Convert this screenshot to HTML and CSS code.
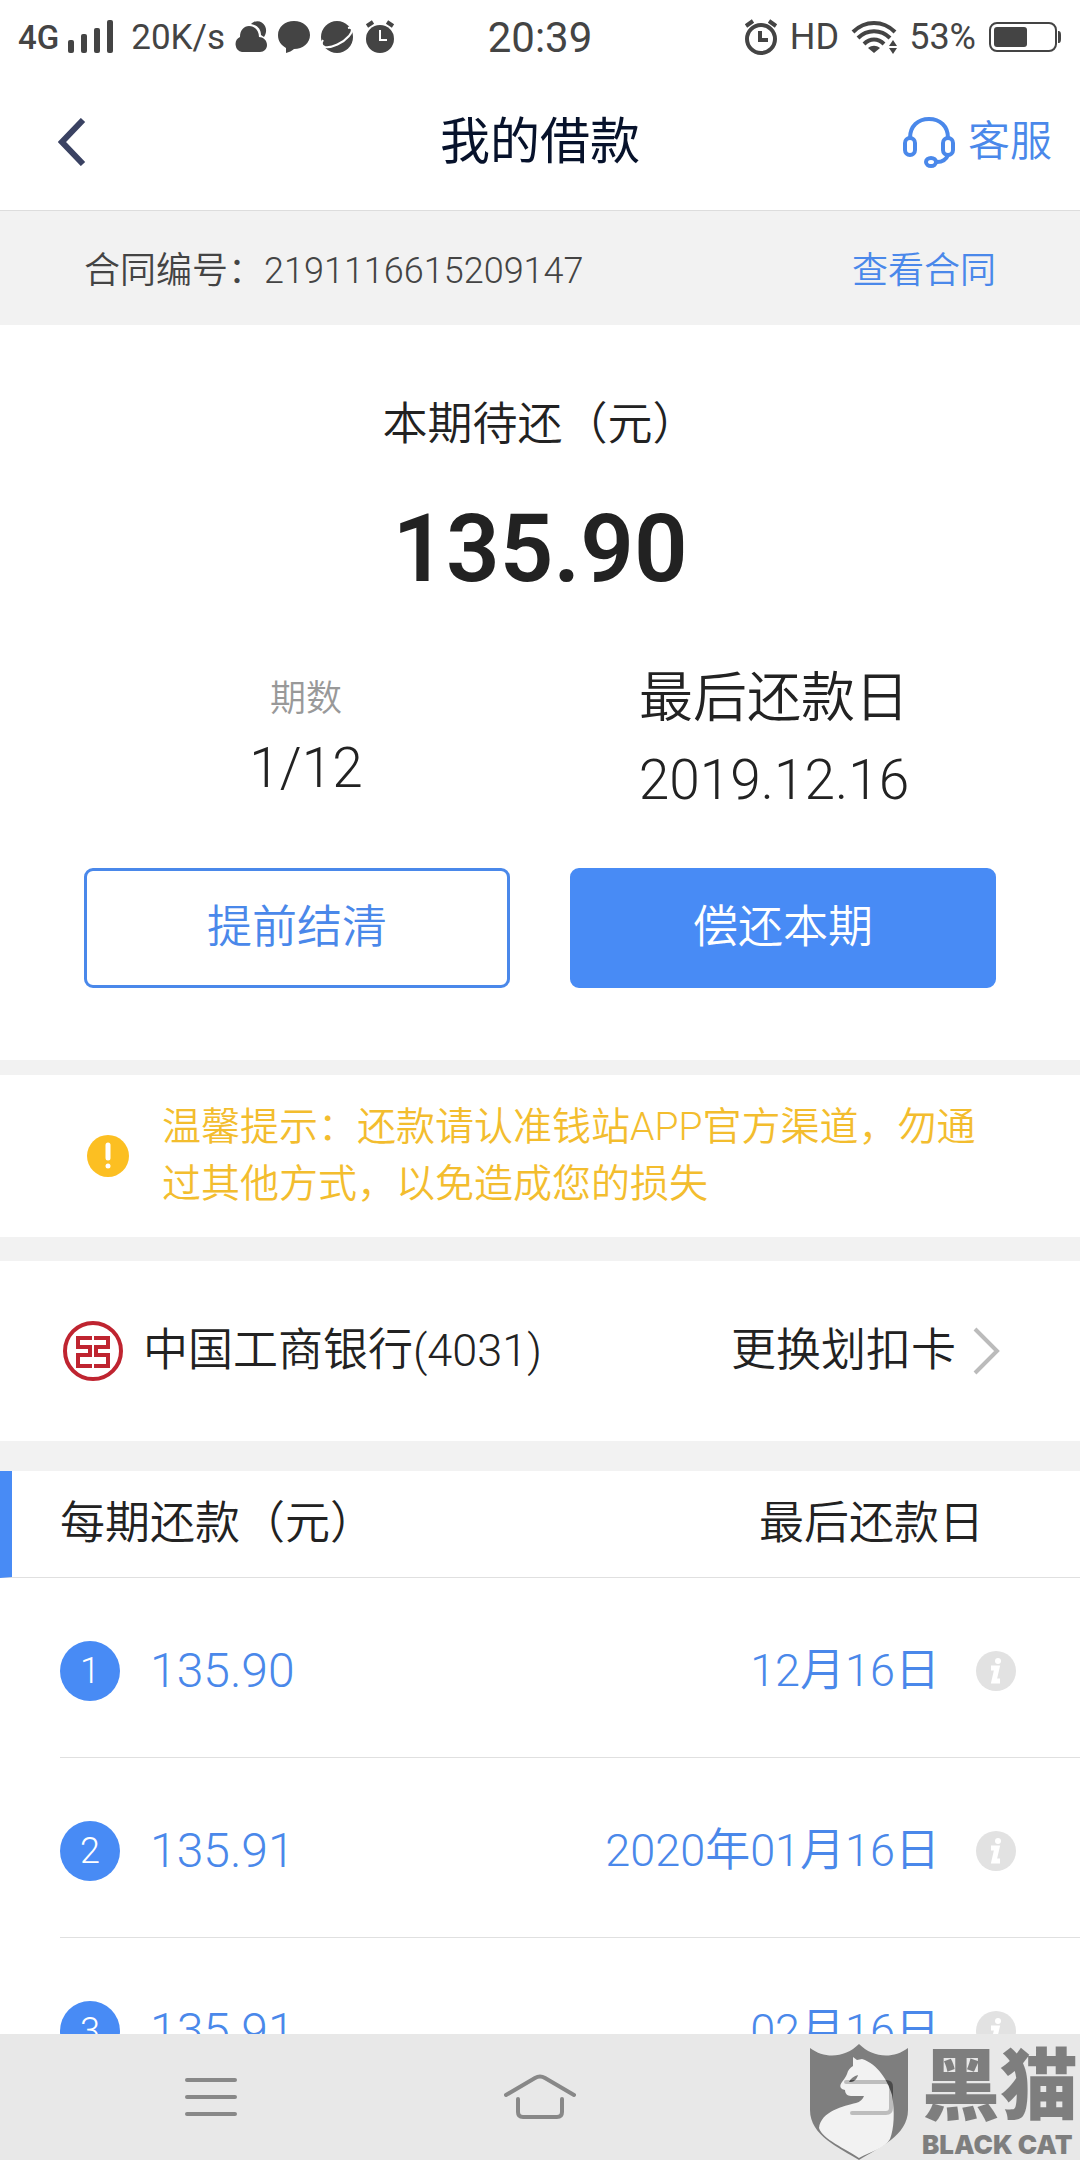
FILE: index.html
```html
<!DOCTYPE html>
<html lang="zh-CN">

<head>
    <meta charset="UTF-8">
    <meta name="viewport" content="width=device-width, initial-scale=1.0">
    <title>我的借款</title>
    <link rel="stylesheet" href="styles.css">
</head>

<body>
    <div class="status-bar">
        <div class="status-left">
            <span class="network">4G</span>
            <svg class="signal" width="46" height="34" viewBox="0 0 46 34">
                <rect x="0" y="20" width="6" height="13" rx="2" />
                <rect x="13" y="14" width="6" height="19" rx="2" />
                <rect x="26" y="8" width="6" height="25" rx="2" />
                <rect x="39" y="0" width="6" height="33" rx="2" />
            </svg>
            <span class="speed">20K/s</span>
            <div class="status-icons">
                <svg width="34" height="34" viewBox="0 0 34 34">
                    <path d="M17 4C21 0 28 0 31 6c2 4 1 8-1 11-1-1-2-1-3-2C27 9 23 5 17 4z" />
                    <path d="M8 32a8 8 0 0 1-2-15C6 10 10 6 15 6c6 0 10 5 10 11 4 0 8 3 8 8 0 4-3 7-7 7z" />
                </svg>
                <svg width="34" height="34" viewBox="0 0 34 34">
                    <path d="M17 1c9 0 16 6 16 14S26 29 17 29c-2 2-5 3-8 4V28C4 25 1 21 1 15 1 7 8 1 17 1z" />
                </svg>
                <svg width="34" height="34" viewBox="0 0 34 34">
                    <circle cx="17" cy="17" r="16" />
                    <path class="ring" d="M28 8c5-1 5 3 1 8-6 7-17 12-24 11-4-1-4-4-2-7" />
                </svg>
                <svg width="34" height="34" viewBox="0 0 34 34">
                    <circle cx="17" cy="19" r="14" />
                    <path class="line" d="M4 6l6-4M30 6l-6-4" />
                    <path class="hand" d="M17 10v10h7" />
                </svg>
            </div>
        </div>
        <time class="clock">20:39</time>
        <div class="status-right">
            <svg width="34" height="36" viewBox="0 0 34 36">
                <circle class="line" cx="17" cy="20" r="14" />
                <path class="line" d="M2 7l7-5M32 7l-7-5M16 12v9h8" />
            </svg>
            <span class="hd">HD</span>
            <svg width="46" height="34" viewBox="0 0 46 34">
                <path class="line" d="M2 12c12-12 30-12 42 0M7 18c9-9 23-9 32 0M13 24c6-6 14-6 20 0" />
                <path d="M17 28c4-3 8-3 12 0l-6 5z" />
                <path d="M38 26l4-6 4 6zM38 28l4 6 4-6z" />
            </svg>
            <span class="battery-text">53%</span>
            <svg width="74" height="32" viewBox="0 0 74 32">
                <rect class="case" x="2" y="2" width="66" height="28" rx="7" />
                <rect x="6" y="6" width="33" height="20" rx="3" />
                <path d="M70 10c3 0 3 2 3 6s0 6-3 6z" />
            </svg>
        </div>
    </div>

    <header class="header">
        <button class="back" type="button" aria-label="返回">
            <svg width="28" height="48" viewBox="0 0 28 48">
                <path d="M25 2L4 24l21 22" />
            </svg>
        </button>
        <h1 class="title">我的借款</h1>
        <a class="service" href="#">
            <svg width="54" height="52" viewBox="0 0 54 52">
                <path d="M8 22C8 10 16 3 27 3s19 7 19 19" />
                <rect x="3" y="22" width="10" height="17" rx="5" />
                <rect x="41" y="22" width="10" height="17" rx="5" />
                <path d="M46 39c-2 5-6 7-11 7" />
                <ellipse cx="29" cy="46" rx="5" ry="4" />
            </svg>
            客服
        </a>
    </header>

    <main class="content">
        <div class="contract">
            <span>合同编号：2191116615209147</span>
            <a href="#">查看合同</a>
        </div>

        <section class="summary">
            <h2 class="summary-title">本期待还（元）</h2>
            <p class="amount">135.90</p>
            <div class="summary-info">
                <div class="period">
                    <p class="label">期数</p>
                    <p class="value">1/12</p>
                </div>
                <div class="deadline">
                    <p class="label">最后还款日</p>
                    <p class="value">2019.12.16</p>
                </div>
            </div>
            <div class="actions">
                <button class="btn" type="button">提前结清</button>
                <button class="btn btn-primary" type="button">偿还本期</button>
            </div>
        </section>

        <section class="notice">
            <svg width="42" height="42" viewBox="0 0 42 42">
                <circle cx="21" cy="21" r="21" />
                <path d="M21 10v13" />
                <path d="M21 31v0" />
            </svg>
            <p>温馨提示：还款请认准钱站APP官方渠道，勿通过其他方式，以免造成您的损失</p>
        </section>

        <section class="bank">
            <svg class="bank-logo" width="60" height="60" viewBox="0 0 60 60">
                <circle cx="30" cy="30" r="28" />
                <path d="M29 17H15v9h12v8H15v11h14M31 17h14v9H33v8h12v11H31" />
            </svg>
            <span class="bank-name">中国工商银行(4031)</span>
            <a class="change-card" href="#">
                <span>更换划扣卡</span>
                <svg width="28" height="48" viewBox="0 0 28 48">
                    <path d="M3 2l22 22L3 46" />
                </svg>
            </a>
        </section>

        <table class="plan">
            <thead>
                <tr>
                    <th>每期还款（元）</th>
                    <th>最后还款日</th>
                </tr>
            </thead>
            <tbody>
                <tr>
                    <td class="no"><span>1</span></td>
                    <td class="money">135.90</td>
                    <td class="date">12月16日</td>
                    <td class="info">
                        <button type="button" aria-label="详情">
                            <svg width="40" height="40" viewBox="0 0 40 40">
                                <circle cx="20" cy="20" r="20" />
                                <path d="M15 17h6l-3 13h6" />
                                <circle class="dot" cx="22" cy="10" r="3" />
                            </svg>
                        </button>
                    </td>
                </tr>
                <tr>
                    <td class="no"><span>2</span></td>
                    <td class="money">135.91</td>
                    <td class="date">2020年01月16日</td>
                    <td class="info">
                        <button type="button" aria-label="详情">
                            <svg width="40" height="40" viewBox="0 0 40 40">
                                <circle cx="20" cy="20" r="20" />
                                <path d="M15 17h6l-3 13h6" />
                                <circle class="dot" cx="22" cy="10" r="3" />
                            </svg>
                        </button>
                    </td>
                </tr>
                <tr>
                    <td class="no"><span>3</span></td>
                    <td class="money">135.91</td>
                    <td class="date">02月16日</td>
                    <td class="info">
                        <button type="button" aria-label="详情">
                            <svg width="40" height="40" viewBox="0 0 40 40">
                                <circle cx="20" cy="20" r="20" />
                                <path d="M15 17h6l-3 13h6" />
                                <circle class="dot" cx="22" cy="10" r="3" />
                            </svg>
                        </button>
                    </td>
                </tr>
            </tbody>
        </table>
    </main>

    <nav class="nav-bar">
        <button type="button" aria-label="菜单">
            <svg width="52" height="40" viewBox="0 0 52 40">
                <path d="M2 3h48M2 20h48M2 37h48" />
            </svg>
        </button>
        <button type="button" aria-label="主页">
            <svg width="72" height="46" viewBox="0 0 72 46">
                <path d="M2 21L31 4q5-3 10 0l29 17M14 25v13q0 5 5 5h34q5 0 5-5V25" />
            </svg>
        </button>
        <button type="button" aria-label="返回">
            <svg width="50" height="40" viewBox="0 0 50 40">
                <path d="M2 5h40q5 0 5 5v21q0 5-5 5H8" />
            </svg>
        </button>
    </nav>

    <div class="watermark">
        <svg width="98" height="116" viewBox="0 0 98 116">
            <path d="M0 4C16 16 36 13 49 0c13 13 33 16 49 4v62c0 26-30 38-49 50C30 104 0 92 0 66z" />
            <path class="cat" d="M43 13l4 3 5-1c16 5 26 22 30 36 3 17 2 34-2 44-5 9-20 13-31 19C36 105 12 95 9 84c2-17 25-22 37-25 4-1 7-4 8-7H41c-4 0-6-3-6-6-5-1-6-4-3-8 2-3 4-5 5-8 1-4 3-6 6-8z" />
            <path class="eye" d="M39 38c2-4 5-6 9-7-1 4-4 7-7 7z" />
        </svg>
        <div class="watermark-text">
            <strong>黑猫</strong>
            <span>BLACK CAT</span>
        </div>
    </div>
</body>

</html>
```

FILE: styles.css
```css
* {
    margin: 0;
    padding: 0;
    box-sizing: border-box;
}

body {
    position: relative;
    display: flex;
    flex-direction: column;
    height: 100vh;
    overflow: hidden;
    background: #fff;
    color: #222;
    font-family: Roboto, "Noto Sans CJK SC", sans-serif;
    font-weight: 350;
    font-size: 45px;
}

svg {
    display: block;
    flex: none;
}

a {
    color: #4a88ea;
    text-decoration: none;
}

button {
    border: 0;
    background: none;
    font: inherit;
    cursor: pointer;
}

/* 状态栏 */
.status-bar {
    display: grid;
    grid-template-columns: 1fr auto 1fr;
    align-items: center;
    height: 74px;
    padding: 0 18px;
    color: #444;
    fill: #444;
    font-size: 36px;
    font-weight: 400;
}

.status-left,
.status-right {
    display: flex;
    align-items: center;
}

.status-left {
    gap: 9px;
}

.status-right {
    justify-content: flex-end;
    gap: 12px;
}

.network {
    font-size: 33px;
    font-weight: 500;
}

.speed {
    margin-left: 8px;
    font-size: 35px;
}

.status-icons {
    display: flex;
    gap: 9px;
}

.clock {
    font-size: 42px;
}

.status-bar .line {
    fill: none;
    stroke: #444;
    stroke-width: 4;
}

.status-bar .ring,
.status-bar .hand {
    fill: none;
    stroke: #fff;
    stroke-width: 2;
}

.status-bar .case {
    fill: none;
    stroke: #444;
    stroke-width: 2;
}

/* 标题栏 */
.header {
    display: grid;
    grid-template-columns: 1fr auto 1fr;
    align-items: center;
    height: 137px;
    padding: 0 28px;
    border-bottom: 1px solid #ddd;
}

.back {
    justify-self: start;
    margin-left: 30px;
}

.back path {
    fill: none;
    stroke: #3a4262;
    stroke-width: 6;
}

.title {
    color: #07122b;
    font-size: 50px;
    font-weight: 400;
    line-height: 60px;
}

.service {
    display: flex;
    align-items: center;
    justify-self: end;
    gap: 12px;
    font-size: 42px;
    line-height: 54px;
}

.service svg {
    fill: none;
    stroke: #4a88ea;
    stroke-width: 4;
}

.content {
    flex: 1;
    min-height: 0;
    overflow: hidden;
    background: #f2f2f2;
}

.contract {
    display: flex;
    align-items: center;
    justify-content: space-between;
    height: 114px;
    padding: 6px 84px 0;
    color: #444;
    font-size: 36px;
    line-height: 48px;
}

/* 本期还款信息 */
.summary {
    padding: 70px 84px 72px;
    background: #fff;
    text-align: center;
}

.summary-title {
    font-size: 45px;
    font-weight: 350;
    line-height: 60px;
}

.amount {
    margin-top: 40px;
    font-size: 94px;
    font-weight: 600;
    line-height: 108px;
}

.summary-info {
    display: grid;
    grid-template-columns: 1fr 1fr;
    margin: 60px -12px 0;
}

.label {
    line-height: 72px;
}

.value {
    font-size: 55px;
    line-height: 66px;
}

.period .label {
    color: #999;
    font-size: 36px;
}

.deadline .label {
    font-size: 54px;
}

.deadline .value {
    margin-top: 12px;
}

.actions {
    display: grid;
    grid-template-columns: 1fr 1fr;
    gap: 60px;
    margin-top: 55px;
}

.btn {
    height: 120px;
    border: 3px solid #4a88ea;
    border-radius: 9px;
    color: #4a88ea;
    line-height: 60px;
}

.btn-primary {
    border-color: #488bf5;
    background: #488bf5;
    color: #fff;
}

.notice {
    display: flex;
    align-items: center;
    gap: 33px;
    margin-top: 15px;
    padding: 24px 87px;
    background: #fff;
    color: #f3bd2e;
    font-size: 39px;
    line-height: 57px;
}

.notice svg {
    fill: #fcbf22;
    stroke: #fff;
    stroke-width: 5;
    stroke-linecap: round;
}

.notice circle {
    stroke: none;
}

/* 银行卡 */
.bank {
    display: flex;
    align-items: center;
    height: 180px;
    margin-top: 24px;
    padding: 0 80px 0 63px;
    background: #fff;
    line-height: 60px;
}

.bank-logo {
    fill: none;
    stroke: #bf2430;
    stroke-width: 4;
}

.bank-name {
    margin-left: 20px;
}

.change-card {
    display: flex;
    align-items: center;
    gap: 16px;
    margin-left: auto;
    color: #222;
}

.change-card path {
    fill: none;
    stroke: #bbb;
    stroke-width: 4;
}

/* 每期还款列表 */
.plan,
.plan thead,
.plan tbody {
    display: block;
}

.plan {
    margin-top: 30px;
    background: #fff;
    line-height: 60px;
}

.plan tr {
    display: flex;
    align-items: center;
    border-bottom: 1px solid #e0e0e0;
}

.plan thead tr {
    justify-content: space-between;
    height: 107px;
    padding: 0 96px 0 48px;
    border-left: 12px solid #488bf5;
}

.plan th {
    font-weight: 350;
}

.plan tbody tr {
    height: 180px;
    margin-left: 60px;
    padding: 7px 64px 0 0;
    color: #4a88ea;
}

.no span {
    display: block;
    width: 60px;
    height: 60px;
    border-radius: 50%;
    background: #488bf5;
    color: #fff;
    font-size: 36px;
    line-height: 60px;
    text-align: center;
}

.money {
    margin-left: 30px;
    font-size: 48px;
}

.date {
    margin-left: auto;
}

.info {
    margin-left: 36px;
}

.info button {
    display: block;
}

.info svg {
    fill: #e2e2e2;
}

.info path {
    fill: none;
    stroke: #fff;
    stroke-width: 5;
}

.info .dot {
    fill: #fff;
}

/* 底部导航 */
.nav-bar {
    display: grid;
    grid-template-columns: 1fr 1fr 1fr;
    height: 126px;
    padding: 0 46px;
    background: #e8e8e8;
}

.nav-bar button {
    display: flex;
    align-items: center;
    justify-content: center;
}

.nav-bar path {
    fill: none;
    stroke: #888;
    stroke-width: 4;
    stroke-linecap: round;
}

.watermark {
    position: absolute;
    right: 2px;
    bottom: 0;
    display: flex;
    gap: 14px;
    opacity: 0.45;
    color: #000;
}

.watermark .cat {
    fill: #fff;
}

.watermark-text {
    display: flex;
    flex-direction: column;
}

.watermark-text strong {
    font-size: 78px;
    font-weight: 900;
    line-height: 88px;
}

.watermark-text span {
    font-family: Inter, sans-serif;
    font-size: 26px;
    font-weight: 900;
    line-height: 26px;
}
```
